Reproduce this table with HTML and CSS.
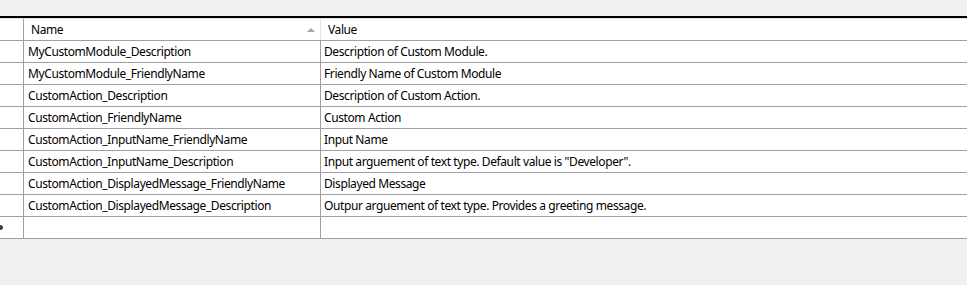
FILE: index.html
```html
<!DOCTYPE html>
<html>
<head>
<meta charset="utf-8">
<link rel="stylesheet" href="styles.css">
</head>
<body>
<div class="top"></div>
<div class="grid">
  <div class="row hdr">
    <div class="c rh"></div>
    <div class="c name">Name<span class="sort"></span></div>
    <div class="c val">Value</div>
  </div>
  <div class="row"><div class="c rh"></div><div class="c name">MyCustomModule_Description</div><div class="c val">Description of Custom Module.</div></div>
  <div class="row"><div class="c rh"></div><div class="c name">MyCustomModule_FriendlyName</div><div class="c val">Friendly Name of Custom Module</div></div>
  <div class="row"><div class="c rh"></div><div class="c name">CustomAction_Description</div><div class="c val">Description of Custom Action.</div></div>
  <div class="row"><div class="c rh"></div><div class="c name">CustomAction_FriendlyName</div><div class="c val">Custom Action</div></div>
  <div class="row"><div class="c rh"></div><div class="c name">CustomAction_InputName_FriendlyName</div><div class="c val">Input Name</div></div>
  <div class="row"><div class="c rh"></div><div class="c name">CustomAction_InputName_Description</div><div class="c val">Input arguement of text type. Default value is "Developer".</div></div>
  <div class="row"><div class="c rh"></div><div class="c name">CustomAction_DisplayedMessage_FriendlyName</div><div class="c val">Displayed Message</div></div>
  <div class="row"><div class="c rh"></div><div class="c name">CustomAction_DisplayedMessage_Description</div><div class="c val">Outpur arguement of text type. Provides a greeting message.</div></div>
  <div class="row newrow"><div class="c rh"><span class="star"></span></div><div class="c name"></div><div class="c val"></div></div>
</div>
</body>
</html>
```
FILE: styles.css
```css
html, body {
  margin: 0;
  padding: 0;
  background: #f0f0f0;
  font-family: "Noto Sans", "Open Sans", sans-serif;
  font-size: 12px;
  letter-spacing: -0.4px;
  color: #000;
}
.top {
  height: 16px;
}
.grid {
  background: #fff;
  border-top: 2px solid #000;
}
.row {
  display: flex;
  height: 21px;
  border-bottom: 1px solid #a0a0a0;
}
.hdr {
  border-top: 1px solid #e3e3e3;
}
.c {
  display: flex;
  align-items: center;
  box-sizing: border-box;
  white-space: nowrap;
  overflow: hidden;
}
.rh {
  width: 24px;
  border-right: 1px solid #a0a0a0;
  position: relative;
  overflow: visible;
}
.name {
  width: 297px;
  border-right: 1px solid #a0a0a0;
  padding-left: 4px;
  position: relative;
}
.val {
  flex: 1;
  padding-left: 3px;
}
.hdr .name {
  padding-left: 7px;
  border-right-color: #e5e5e5;
}
.hdr .val {
  padding-left: 7px;
}
.sort {
  position: absolute;
  right: 5px;
  top: 9px;
  width: 0;
  height: 0;
  border-left: 4px solid transparent;
  border-right: 4px solid transparent;
  border-bottom: 4px solid #a8a8a8;
}
.star {
  position: absolute;
  left: -3px;
  top: 8px;
  width: 6px;
  height: 5px;
  border-radius: 50%;
  background: #3c3c3c;
}
```
